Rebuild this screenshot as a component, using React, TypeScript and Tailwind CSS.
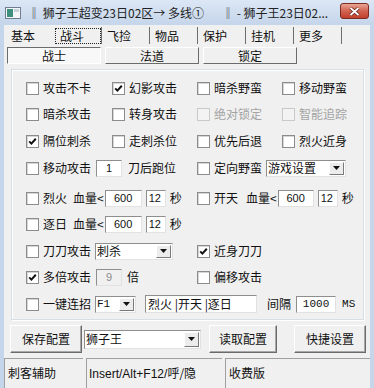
import React from 'react';

const cjk = '[font-family:"Noto_Sans_CJK_SC","Noto_Sans",sans-serif]';

function Check({ checked = false, disabled = false }: { checked?: boolean; disabled?: boolean }) {
  return (
    <span
      className={`w-[13px] h-[13px] shrink-0 flex items-center justify-center border ${
        disabled ? 'border-[#c9c9c9] bg-[#f3f3f3]' : 'border-[#8c8c8c] bg-white shadow-[inset_1px_1px_0_#d6d6d6]'
      }`}
    >
      {checked && (
        <svg width="9" height="9" viewBox="0 0 9 9">
          <path d="M1.2 4.4 L3.4 6.6 L7.8 1.8" fill="none" stroke="#111" strokeWidth="2" />
        </svg>
      )}
    </span>
  );
}

function Opt({ label, checked, disabled }: { label: string; checked?: boolean; disabled?: boolean }) {
  return (
    <div className="flex items-center gap-[4px] whitespace-nowrap">
      <Check checked={checked} disabled={disabled} />
      <span className={disabled ? 'text-[#a3a3a3]' : 'text-[#111]'}>{label}</span>
    </div>
  );
}

function Edit({ value, w, disabled, mono, center = true }: { value: string; w: string; disabled?: boolean; mono?: boolean; center?: boolean }) {
  return (
    <div
      className={`${w} h-[17px] flex items-center border border-t-[#8e8e8e] border-l-[#8e8e8e] border-r-[#e2e2e2] border-b-[#e2e2e2] ${
        disabled ? 'bg-[#f0f0f0] text-[#8d8d8d]' : 'bg-white text-[#111]'
      } ${center ? 'justify-center' : 'pl-[2px]'} ${mono ? '[font-family:"Liberation_Mono",monospace] text-[11px]' : '[font-family:"Liberation_Sans",sans-serif] text-[11px]'}`}
    >
      {value}
    </div>
  );
}

function Combo({ value, w, h = 'h-[17px]', mono }: { value: string; w: string; h?: string; mono?: boolean }) {
  return (
    <div className={`${w} ${h} flex items-stretch bg-white border border-t-[#8e8e8e] border-l-[#8e8e8e] border-r-[#e2e2e2] border-b-[#e2e2e2]`}>
      <span className={`flex-1 pl-[1px] flex items-center whitespace-nowrap overflow-hidden ${mono ? '[font-family:"Liberation_Mono",monospace] text-[11px]' : ''}`}>{value}</span>
      <span className="w-[15px] m-[1px] flex items-center justify-center bg-[#ececec] border border-t-white border-l-white border-r-[#7a7a7a] border-b-[#7a7a7a]">
        <svg width="7" height="4" viewBox="0 0 7 4">
          <path d="M0 0 H7 L3.5 4 Z" fill="#111" />
        </svg>
      </span>
    </div>
  );
}

function Btn({ label, w }: { label: string; w: string }) {
  return (
    <div className={`${w} h-[28px] flex items-center justify-center bg-[#f0f0f0] border border-t-white border-l-white border-r-[#6b6b6b] border-b-[#6b6b6b] shadow-[inset_-1px_-1px_0_#a8a8a8]`}>
      {label}
    </div>
  );
}

const tabs = ['基本', '战斗', '飞捡', '物品', '保护', '挂机', '更多'];

export default function App() {
  return (
    <div className={`w-[374px] h-[388px] overflow-hidden bg-[#c6d6ea] ${cjk} text-[12px] text-[#111] flex flex-col`}>
      {/* title bar */}
      <div className="h-[25px] shrink-0 flex items-center bg-gradient-to-b from-[#dce7f5] to-[#c5d5ea] pl-[5px] pr-[5px]">
        <svg width="16" height="12" viewBox="0 0 16 12" className="shrink-0">
          <rect x="0.5" y="0.5" width="15" height="11" fill="#f4f6f8" stroke="#6f7f8f" />
          <rect x="2" y="2" width="6" height="8" fill="#3f8f7f" />
          <rect x="9" y="2" width="5" height="3" fill="#c8d4dc" />
        </svg>
        <span className="ml-[7px] w-[194px] whitespace-nowrap text-[#222]">‖ 狮子王超变23日02区→ 多线①</span>
        <span className="whitespace-nowrap text-[#222]">‖ - 狮子王23日02...</span>
        <div className="ml-auto mt-[-3px] w-[29px] h-[16px] rounded-[3px] border border-[#7d2b22] bg-gradient-to-b from-[#e8a596] via-[#d2624f] to-[#c0402c] flex items-center justify-center">
          <svg width="11" height="9" viewBox="0 0 11 9">
            <path d="M1.5 1 L9.5 8 M9.5 1 L1.5 8" stroke="#5a1a12" strokeWidth="3.2" />
            <path d="M1.5 1 L9.5 8 M9.5 1 L1.5 8" stroke="#fff" strokeWidth="1.8" />
          </svg>
        </div>
      </div>

      {/* client area */}
      <div className="flex-1 mx-[4px] bg-[#f0f0f0] flex flex-col">
        {/* tabs */}
        <div className="mt-[2px] h-[17px] flex pl-[2px]">
          {tabs.map((t, i) => (
            <div key={t} className={`w-[48px] h-[17px] flex items-center ${i > 0 ? 'border-r border-r-[#6e6e6e]' : ''}`}>
              {i === 1 ? (
                <span className="ml-[1px] w-[46px] h-[16px] border border-dotted border-[#222] flex items-center pl-[4px]">{t}</span>
              ) : (
                <span className="pl-[5px]">{t}</span>
              )}
            </div>
          ))}
        </div>

        {/* sub tabs */}
        <div className="mt-[3px] flex gap-[4px] pl-[3px]">
          <div className="w-[94px] h-[17px] flex items-center justify-center bg-[#f8f8f8] border border-t-[#6b6b6b] border-l-[#6b6b6b] border-r-white border-b-white">战士</div>
          <div className="w-[94px] h-[17px] flex items-center justify-center bg-[#f0f0f0] border border-t-white border-l-white border-r-[#6b6b6b] border-b-[#6b6b6b]">法道</div>
          <div className="w-[94px] h-[17px] flex items-center justify-center bg-[#f0f0f0] border border-t-white border-l-white border-r-[#6b6b6b] border-b-[#6b6b6b]">锁定</div>
        </div>

        {/* group box */}
        <div className="mt-[5px] ml-[7px] w-[353px] h-[251px] border border-[#d5dfe5] shadow-[inset_1px_1px_0_#fff,1px_1px_0_#fff] pl-[14px] pt-[8px]">
          <div className="h-[20px] grid grid-cols-[86px_85px_85px_1fr] items-center">
            <Opt label="攻击不卡" />
            <Opt label="幻影攻击" checked />
            <Opt label="暗杀野蛮" />
            <Opt label="移动野蛮" />
          </div>
          <div className="mt-[6px] h-[20px] grid grid-cols-[86px_85px_85px_1fr] items-center">
            <Opt label="暗杀攻击" />
            <Opt label="转身攻击" />
            <Opt label="绝对锁定" disabled />
            <Opt label="智能追踪" disabled />
          </div>
          <div className="mt-[7px] h-[20px] grid grid-cols-[86px_85px_85px_1fr] items-center">
            <Opt label="隔位刺杀" checked />
            <Opt label="走刺杀位" />
            <Opt label="优先后退" />
            <Opt label="烈火近身" />
          </div>
          <div className="mt-[7px] h-[20px] grid grid-cols-[171px_1fr] items-center">
            <div className="flex items-center">
              <Opt label="移动攻击" />
              <div className="ml-[5px]"><Edit value="1" w="w-[26px]" /></div>
              <span className="ml-[6px]">刀后跑位</span>
            </div>
            <div className="flex items-center">
              <Opt label="定向野蛮" />
              <div className="ml-[4px]"><Combo value="游戏设置" w="w-[80px]" /></div>
            </div>
          </div>
          <div className="mt-[10px] h-[20px] grid grid-cols-[171px_1fr] items-center">
            <div className="flex items-center">
              <Opt label="烈火" />
              <span className="ml-[6px]">血量&lt;</span>
              <div className="ml-[1px]"><Edit value="600" w="w-[37px]" /></div>
              <div className="ml-[4px]"><Edit value="12" w="w-[20px]" center={false} /></div>
              <span className="ml-[4px]">秒</span>
            </div>
            <div className="flex items-center">
              <Opt label="开天" />
              <span className="ml-[8px]">血量&lt;</span>
              <div className="ml-[1px]"><Edit value="600" w="w-[36px]" /></div>
              <div className="ml-[4px]"><Edit value="12" w="w-[20px]" center={false} /></div>
              <span className="ml-[4px]">秒</span>
            </div>
          </div>
          <div className="mt-[6px] h-[20px] flex items-center">
            <Opt label="逐日" />
            <span className="ml-[6px]">血量&lt;</span>
            <div className="ml-[1px]"><Edit value="600" w="w-[37px]" /></div>
            <div className="ml-[4px]"><Edit value="12" w="w-[20px]" center={false} /></div>
            <span className="ml-[4px]">秒</span>
          </div>
          <div className="mt-[7px] h-[20px] grid grid-cols-[171px_1fr] items-center">
            <div className="flex items-center">
              <Opt label="刀刀攻击" />
              <div className="ml-[4px]"><Combo value="刺杀" w="w-[78px]" /></div>
            </div>
            <Opt label="近身刀刀" checked />
          </div>
          <div className="mt-[6px] h-[20px] grid grid-cols-[171px_1fr] items-center">
            <div className="flex items-center">
              <Opt label="多倍攻击" checked />
              <div className="ml-[5px]"><Edit value="9" w="w-[26px]" disabled /></div>
              <span className="ml-[5px]">倍</span>
            </div>
            <Opt label="偏移攻击" />
          </div>
          <div className="mt-[7px] h-[20px] flex items-center">
            <Opt label="一键连招" />
            <div className="ml-[4px]"><Combo value="F1" w="w-[41px]" mono /></div>
            <div className="ml-[9px] w-[112px] h-[18px] flex items-center pl-[2px] bg-white border border-t-[#8e8e8e] border-l-[#8e8e8e] border-r-[#e2e2e2] border-b-[#e2e2e2] whitespace-nowrap">烈火 |开天 |逐日</div>
            <span className="ml-[10px]">间隔</span>
            <div className="ml-[5px]"><Edit value="1000" w="w-[40px]" mono /></div>
            <span className="ml-[6px] [font-family:'Liberation_Mono',monospace] text-[11px]">MS</span>
          </div>
        </div>

        {/* buttons */}
        <div className="mt-[5px] pl-[6px] flex items-center">
          <Btn label="保存配置" w="w-[72px]" />
          <div className="ml-[2px]"><Combo value="狮子王" w="w-[117px]" h="h-[19px]" /></div>
          <div className="ml-[8px]"><Btn label="读取配置" w="w-[68px]" /></div>
          <div className="ml-[17px]"><Btn label="快捷设置" w="w-[72px]" /></div>
        </div>

        {/* status bar */}
        <div className="mt-[5px] flex-1 flex gap-[3px]">
          <div className="w-[79px] border-t border-l border-t-[#a0a0a0] border-l-[#a0a0a0] pl-[3px] pt-[5px]">刺客辅助</div>
          <div className="w-[136px] border-t border-l border-t-[#a0a0a0] border-l-[#a0a0a0] pl-[2px] pt-[5px] whitespace-nowrap">
            <span className="[font-family:'Liberation_Sans','Noto_Sans_CJK_SC',sans-serif]">Insert/Alt+F12/</span>呼/隐
          </div>
          <div className="flex-1 border-t border-l border-t-[#a0a0a0] border-l-[#a0a0a0] pl-[3px] pt-[5px]">收费版</div>
        </div>
      </div>
    </div>
  );
}
